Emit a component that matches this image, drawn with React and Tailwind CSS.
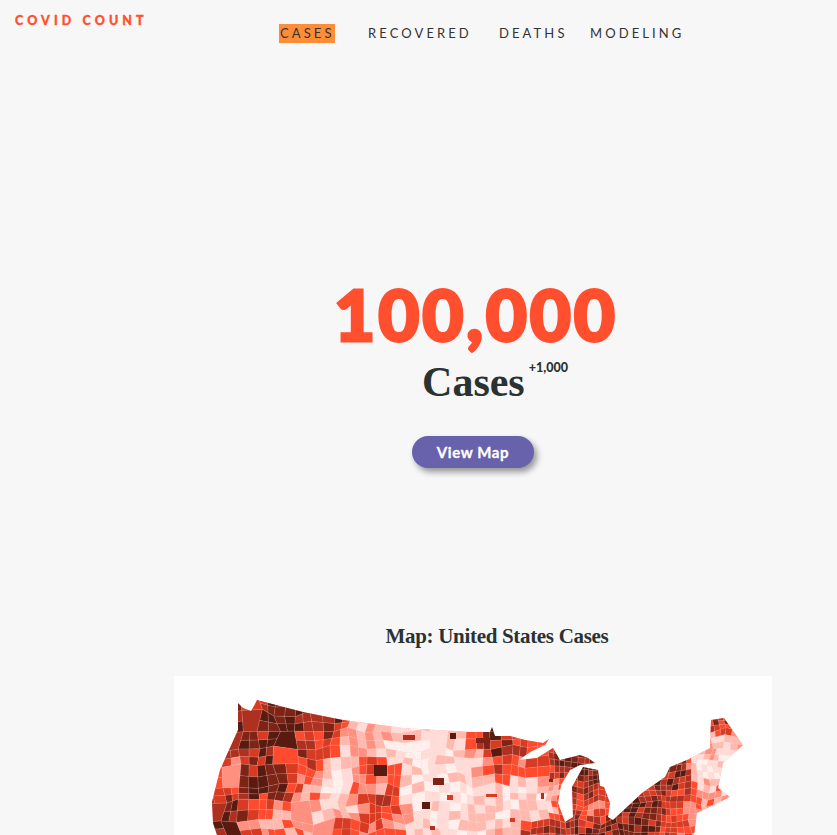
import { useMemo } from "react"

const sans = "font-['Lato','Open_Sans',sans-serif]"
const serif = "font-['Liberation_Serif','DejaVu_Serif',serif]"

const navItems = [
  { label: "CASES", className: "ml-[279px] w-[56px] bg-[#ff8c36] text-[#1c1c1c]" },
  { label: "RECOVERED", className: "ml-[32px] w-[102px]" },
  { label: "DEATHS", className: "ml-[29px] w-[67px]" },
  { label: "MODELING", className: "ml-[24px] w-[96px]" },
]

// map box starts at page x 174, y 676
const MAP_X = 174
const MAP_Y = 676

const outline = [
  [238, 703], [243, 708], [251, 711], [254, 706], [257, 700], [303, 712], [343, 720], [403, 728],
  [470, 732], [490, 732], [492, 727], [495, 736], [510, 736], [525, 740], [543, 743], [549, 739],
  [545, 745], [530, 752], [519, 760], [537, 758], [553, 748], [560, 760], [580, 755], [588, 758],
  [595, 763], [580, 765], [570, 770], [561, 785], [558, 803], [565, 822], [573, 817], [572, 787],
  [583, 767], [598, 770], [600, 786], [604, 787], [610, 803], [608, 817], [613, 820], [642, 793],
  [665, 777], [670, 767], [687, 760], [710, 748], [711, 720], [724, 718], [743, 745], [723, 763],
  [718, 788], [730, 797], [697, 813], [694, 835], [217, 835], [213, 823], [212, 802], [220, 770],
  [238, 730],
]

// intensity samples read off the picture: x, y, 0 pale .. 1 darkest
const samples = [
  [245, 730, 1], [255, 715, 0.6], [275, 720, 0.95], [300, 722, 0.95], [270, 745, 0.85], [300, 750, 0.75],
  [310, 735, 0.55], [320, 720, 0.95], [335, 725, 0.8], [350, 730, 0.3], [345, 745, 0.3], [380, 735, 0.3],
  [385, 750, 0.2], [400, 745, 0.15], [245, 775, 0.65], [255, 790, 0.95], [270, 780, 0.95], [280, 785, 0.95],
  [290, 790, 0.7], [300, 760, 0.65], [232, 770, 0.5], [235, 810, 0.85], [225, 825, 0.9], [250, 825, 0.45],
  [260, 805, 0.45], [280, 815, 0.35], [290, 830, 0.4], [310, 790, 0.3], [330, 780, 0.12], [340, 785, 0.02],
  [350, 805, 0.1], [355, 795, 0.4], [300, 810, 0.3], [325, 825, 0.3], [367, 803, 0.65], [383, 803, 0.7],
  [395, 805, 0.5], [355, 815, 0.5], [340, 830, 0.5], [430, 745, 0.1], [450, 750, 0.14], [430, 770, 0.06],
  [455, 770, 0.12], [380, 770, 0.6], [383, 787, 0.4], [430, 815, 0.1], [450, 820, 0.1], [480, 800, 0.12],
  [410, 800, 0.14], [420, 770, 0.12], [440, 790, 0.1], [490, 745, 0.85], [510, 745, 0.7], [500, 770, 0.6],
  [480, 760, 0.18], [520, 790, 0.1], [500, 800, 0.1], [530, 770, 0.5], [545, 770, 0.7], [525, 780, 0.18],
  [540, 790, 0.18], [540, 810, 0.15], [570, 830, 0.8], [540, 825, 0.7], [570, 763, 0.85], [590, 763, 0.95],
  [590, 780, 0.95], [600, 790, 0.85], [600, 805, 0.5], [585, 805, 0.6], [620, 810, 0.85], [650, 800, 0.85],
  [670, 780, 0.9], [680, 770, 0.85], [640, 820, 0.9], [620, 830, 0.9], [680, 800, 0.6], [690, 815, 0.5],
  [700, 820, 0.35], [700, 765, 0.08], [710, 770, 0.06], [700, 750, 0.45], [715, 740, 0.25], [718, 723, 0.7],
  [740, 745, 0.4], [725, 760, 0.1], [712, 790, 0.3],
]

// single dark counties standing out from the pale plains
const spots = [
  [450, 733, 6, 6, "#591a10"], [422, 802, 8, 7, "#591a10"], [433, 778, 11, 7, "#7d2416"], [430, 826, 5, 4, "#ae3120"],
  [447, 795, 6, 5, "#d93a22"], [403, 735, 12, 5, "#ae3120"], [374, 765, 13, 11, "#591a10"], [476, 738, 14, 5, "#7d2416"],
  [486, 794, 11, 3, "#d93a22"], [541, 793, 3, 6, "#ae3120"], [549, 779, 4, 3, "#7d2416"], [510, 818, 5, 4, "#d93a22"],
]

const shades = ["#fff0ed", "#ffdcd7", "#ffb9ae", "#ff8f7f", "#ff4a2d", "#d93a22", "#ae3120", "#7d2416", "#591a10"]

function seeded(seed) {
  let s = seed
  return () => {
    s = (s * 1664525 + 1013904223) % 4294967296
    return s / 4294967296
  }
}

function intensityAt(x, y) {
  let sum = 0
  let weight = 0
  for (const [sx, sy, v] of samples) {
    const d = (x - sx) ** 2 + (y - sy) ** 2 + 4
    const w = 1 / (d * d)
    sum += v * w
    weight += w
  }
  return sum / weight
}

function buildCounties() {
  const rand = seeded(20200)
  const step = 18
  const cols = 32
  const rows = 8
  const grid = []
  for (let c = 0; c <= cols; c++) {
    grid[c] = []
    for (let r = 0; r <= rows; r++) {
      grid[c][r] = [205 + c * step + (rand() - 0.5) * 9, 695 + r * step + (rand() - 0.5) * 9]
    }
  }
  const cells = []
  for (let c = 0; c < cols; c++) {
    for (let r = 0; r < rows; r++) {
      const [a, b, d, e] = [grid[c][r], grid[c + 1][r], grid[c + 1][r + 1], grid[c][r + 1]]
      const midX = (a[0] + d[0]) / 2
      const coin = rand()
      const n = midX < 340 ? (coin < 0.2 ? 1 : 2) : midX < 540 ? 2 : 3
      const lerp = (u, v) => [
        (1 - v) * ((1 - u) * a[0] + u * b[0]) + v * ((1 - u) * e[0] + u * d[0]),
        (1 - v) * ((1 - u) * a[1] + u * b[1]) + v * ((1 - u) * e[1] + u * d[1]),
      ]
      for (let i = 0; i < n; i++) {
        for (let j = 0; j < n; j++) {
          const corners = [lerp(i / n, j / n), lerp((i + 1) / n, j / n), lerp((i + 1) / n, (j + 1) / n), lerp(i / n, (j + 1) / n)]
          const cx = (corners[0][0] + corners[2][0]) / 2
          const cy = (corners[0][1] + corners[2][1]) / 2
          const value = intensityAt(cx, cy)
          // pale areas stay pale, busy areas get more spread
          const level = value * 8 + (rand() - 0.5) * (2 + value * 2)
          const fill = shades[Math.max(0, Math.min(8, Math.round(level)))]
          const d2 = corners.map((p, k) => `${k ? "L" : "M"}${(p[0] - MAP_X).toFixed(1)} ${(p[1] - MAP_Y).toFixed(1)}`).join("") + "Z"
          cells.push({ d: d2, fill })
        }
      }
    }
  }
  return cells
}

function CountyMap() {
  const cells = useMemo(buildCounties, [])
  const clip = outline.map(([x, y]) => `${x - MAP_X},${y - MAP_Y}`).join(" ")
  return (
    <div className="h-[159px] w-[598px] overflow-hidden bg-white">
      <svg viewBox="0 0 598 159" className="block h-[159px] w-[598px] blur-[0.4px]">
        <defs>
          <clipPath id="usa">
            <polygon points={clip} />
          </clipPath>
        </defs>
        <g clipPath="url(#usa)">
          <rect width="598" height="159" fill="#ffb9ae" />
          {cells.map((cell, i) => (
            <path key={i} d={cell.d} fill={cell.fill} stroke="#ffffff" strokeOpacity="0.2" strokeWidth="0.6" />
          ))}
          {spots.map(([x, y, w, h, fill], i) => (
            <rect key={i} x={x - MAP_X} y={y - MAP_Y} width={w} height={h} fill={fill} />
          ))}
        </g>
      </svg>
    </div>
  )
}

export default function App() {
  return (
    <div className={`h-[835px] overflow-hidden bg-[#f7f7f7] ${sans}`}>
      <header className="relative h-[60px]">
        <div className="pl-[15px] pt-[13px] text-[12.5px] leading-[15px] font-black tracking-[4.1px] text-[#ff4f2e] [-webkit-text-stroke:0.3px_#ff4f2e]">COVID COUNT</div>
        <nav className="mt-[-4px] flex items-center">
          {navItems.map((item) => (
            <div key={item.label} className={`h-[19px] pl-[1px] text-[13px] leading-[19px] tracking-[3.1px] whitespace-nowrap text-[#333333] ${item.className}`}>
              {item.label}
            </div>
          ))}
        </nav>
      </header>

      <main className="ml-[174px] flex w-[598px] flex-col items-center">
        <div className="mt-[210px] pl-[6px] text-[71px] leading-[88px] font-black tracking-[0.04em] text-[#ff4f2e] [-webkit-text-stroke:3px_#ff4f2e]">100,000</div>
        <div className="flex items-start pl-[44px] text-[#2b3233]">
          <span className={`${serif} text-[42px] leading-[48px] font-bold`}>Cases</span>
          <span className="ml-[4px] mt-[3px] text-[12.5px] leading-[14px] font-black">+1,000</span>
        </div>
        <button className="mt-[30px] h-[32px] w-[122px] rounded-full bg-[#6861ab] text-[15px] font-bold tracking-[0.04em] text-white shadow-[3px_4px_6px_rgba(0,0,0,0.4)] [-webkit-text-stroke:0.3px_#ffffff]">
          View Map
        </button>
        <h2 className={`${serif} mt-[154px] pl-[48px] text-[21px] leading-[28px] font-bold tracking-[-0.015em] text-[#2b3233]`}>Map: United States Cases</h2>
        <div className="mt-[26px]">
          <CountyMap />
        </div>
      </main>
    </div>
  )
}
